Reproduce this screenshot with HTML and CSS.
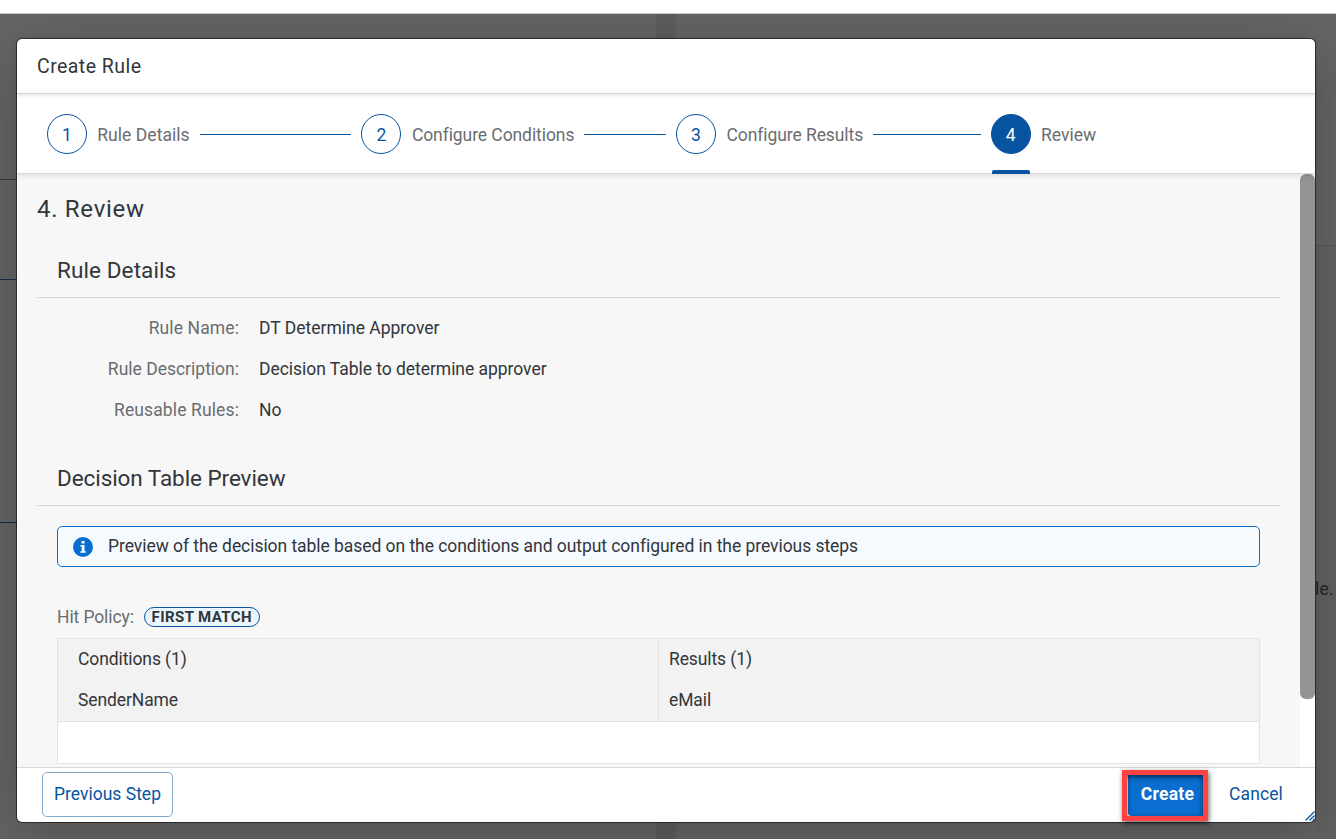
FILE: index.html
```html
<!DOCTYPE html>
<html lang="en">
<head>
<meta charset="utf-8">
<title>Create Rule</title>
<link rel="stylesheet" href="styles.css">
</head>
<body>
<div class="topbar"></div>
<div class="backdrop">
  <div class="page-left"><div class="tile tile-first"></div><div class="tile tile-second"></div><div class="tile tile-third"></div></div>
  <div class="page-gap"></div>
  <div class="page-right"><span class="page-text">le.</span></div>
  <section class="dialog">
    <header class="dialog-header"><h1 class="dialog-title">Create Rule</h1></header>
    <nav class="steps">
      <div class="step"><span class="step-number">1</span><span class="step-label label-details">Rule Details</span><span class="step-line"></span></div>
      <div class="step"><span class="step-number">2</span><span class="step-label label-conditions">Configure Conditions</span><span class="step-line"></span></div>
      <div class="step"><span class="step-number">3</span><span class="step-label label-results">Configure Results</span><span class="step-line"></span></div>
      <div class="step current"><span class="step-number">4</span><span class="step-label">Review</span></div>
    </nav>
    <div class="dialog-body">
      <main class="content">
        <h2 class="step-title">4. Review</h2>
        <h3 class="section-title title-details">Rule Details</h3>
        <dl class="details">
          <dt class="wide">Rule Name:</dt><dd>DT Determine Approver</dd>
          <dt>Rule Description:</dt><dd class="description">Decision Table to determine approver</dd>
          <dt class="wide">Reusable Rules:</dt><dd>No</dd>
        </dl>
        <h3 class="section-title title-preview">Decision Table Preview</h3>
        <div class="message">
          <svg class="info" width="20" height="20" viewBox="0 0 20 20"><circle cx="10" cy="10" r="10" fill="#0a6ed1"/><path d="M8.6 4h2.9v2.5H8.6zM7.5 8h4v6.2h1.3v1.5H7.4v-1.5h1.3V9.4H7.5z" fill="#fff"/></svg>
          <span class="message-text">Preview of the decision table based on the conditions and output configured in the previous steps</span>
        </div>
        <div class="policy"><span class="policy-label">Hit Policy:</span><span class="badge">FIRST MATCH</span></div>
        <div class="table">
          <div class="table-head">
            <div class="cell"><span>Conditions (1)</span><span>SenderName</span></div>
            <div class="cell cell-results"><span>Results (1)</span><span>eMail</span></div>
          </div>
          <div class="table-row"></div>
        </div>
      </main>
      <div class="scrollbar"><div class="thumb"></div></div>
    </div>
    <footer class="dialog-footer">
      <button class="button previous">Previous Step</button>
      <div class="highlight"><button class="button create">Create</button></div>
      <button class="button cancel">Cancel</button>
      <svg class="resize" width="11" height="11" viewBox="0 0 11 11"><path d="M1.5 9.5 10.5.5M5.5 9.5 10.5 4.5M8.8 9.8 10.5 8.1" stroke="#0854a0" stroke-width="1.4" fill="none"/></svg>
    </footer>
  </section>
</div>
</body>
</html>
```
FILE: styles.css
```css
* { box-sizing: border-box; }
body {
  margin: 0;
  height: 839px;
  overflow: hidden;
  display: flex;
  flex-direction: column;
  font-family: Roboto, "Noto Sans", sans-serif;
  font-size: 17.5px;
  color: #32363a;
}
h1, h2, h3, dl, dd { margin: 0; font-weight: 400; }
.topbar { height: 14px; flex: none; background: #fff; border-bottom: 1px solid #ccc; }
.backdrop {
  position: relative;
  flex: 1;
  padding: 25px 21px 17px 17px;
  background: #656565;
  overflow: hidden;
}
.page-left { position: absolute; left: 0; top: 0; width: 656px; height: 100%; }
.tile { border-bottom: 1px solid #3a3b3c; }
.tile-first { height: 166px; }
.tile-second { height: 100px; border-color: #1c2f45; }
.tile-third { height: 243px; border-color: #122b49; }
.page-gap { position: absolute; left: 656px; top: 0; width: 20px; height: 100%; background: #5c5f5e; }
.page-right { position: absolute; left: 1315px; top: 231px; width: 21px; height: 594px; border-top: 1px solid #565656; background: #626262; }
.page-text { position: absolute; left: 0; top: 333px; line-height: 20px; letter-spacing: .2px; color: #252729; }
.dialog {
  position: relative;
  width: 1298px;
  height: 783px;
  display: flex;
  flex-direction: column;
  border-radius: 5px;
  background: #fff;
  box-shadow: 0 0 0 1px rgba(0,0,0,.5), 0 12px 60px rgba(0,0,0,.24);
}
.dialog-header {
  height: 55px;
  flex: none;
  padding-left: 20px;
  border-bottom: 1px solid #d9d9d9;
  box-shadow: 0 1px 4px rgba(0,0,0,.12);
}
.dialog-title { font-size: 19.5px; line-height: 56px; letter-spacing: .45px; }
.steps {
  position: relative;
  z-index: 1;
  height: 80px;
  flex: none;
  display: flex;
  padding-left: 29.8px;
  border-bottom: 1px solid #d9d9d9;
  box-shadow: 0 2px 5px rgba(0,0,0,.1);
}
.step { position: relative; flex: none; width: 314.6px; height: 79px; display: flex; align-items: center; padding-right: 10px; }
.step-number {
  width: 40px;
  height: 40px;
  flex: none;
  border: 1px solid #0854a0;
  border-radius: 50%;
  line-height: 40px;
  text-align: center;
  color: #0854a0;
}
.step-label { margin: 2px 10px 0 10.5px; color: #6a6d70; white-space: nowrap; }
.label-details { letter-spacing: .04px; }
.label-conditions { letter-spacing: -.08px; }
.label-results { letter-spacing: -.08px; }
.step-line { flex: 1; height: 1px; margin-top: 2px; background: #0854a0; }
.current .step-number { background: #0854a0; color: #fff; }
.current::after {
  content: "";
  position: absolute;
  left: 1px;
  bottom: -1px;
  width: 38px;
  height: 4px;
  border-radius: 2px 2px 0 0;
  background: #0854a0;
}
.dialog-body { flex: 1; min-height: 0; display: flex; background: #f7f7f7; overflow: hidden; }
.content { width: 1283px; padding: 15px 20px 0; }
.scrollbar { width: 15px; background: #fff; }
.thumb { height: 525px; border-radius: 6px; background: #949494; }
.step-title { font-size: 24px; line-height: 40px; letter-spacing: .7px; }
.section-title { height: 69px; padding: 29px 0 0 20px; border-bottom: 1px solid #d9d9d9; font-size: 22.5px; line-height: 24px; }
.title-details { letter-spacing: .1px; }
.title-preview { letter-spacing: -.07px; }
.details { display: grid; grid-template-columns: 202px 1fr; column-gap: 20px; grid-auto-rows: 41px; line-height: 41px; padding-top: 10px; height: 139px; }
.details dt { text-align: right; color: #6a6d70; }
.details .wide { letter-spacing: .12px; }
.description { letter-spacing: -.04px; }
.message {
  display: flex;
  align-items: center;
  gap: 15px;
  height: 41px;
  margin: 20px 20px 0;
  padding-left: 15px;
  border: 1px solid #0a6ed1;
  border-radius: 5px;
  background: #f5faff;
  white-space: nowrap;
}
.message-text { letter-spacing: -.053px; padding-bottom: 2px; }
.policy { display: flex; align-items: center; gap: 10px; height: 20px; margin: 40px 0 11px 20px; color: #6a6d70; }
.policy-label { letter-spacing: -.1px; }
.badge {
  width: 116px;
  height: 20px;
  border: 1px solid #0854a0;
  border-radius: 10px;
  background: #ebf5fe;
  color: #32363a;
  font-size: 15px;
  font-weight: 700;
  line-height: 18px;
  letter-spacing: .4px;
  text-align: center;
  white-space: nowrap;
}
.table { width: 1203px; margin-left: 20px; border: 1px solid #e4e4e4; background: #fff; }
.table-head { display: flex; height: 83px; border-bottom: 1px solid #e4e4e4; background: #f2f2f2; }
.cell { width: 600px; padding-left: 20px; display: flex; flex-direction: column; align-items: flex-start; line-height: 41px; letter-spacing: -.1px; }
.cell-results { flex: 1; padding-left: 10px; border-left: 1px solid #e4e4e4; }
.table-row { height: 41px; }
.dialog-footer { position: relative; height: 55px; flex: none; display: flex; padding: 2px 20px 0 25px; border-top: 1px solid #d9d9d9; }
.button { font: inherit; padding: 0; border: 0; background: transparent; color: #0854a0; white-space: nowrap; }
.previous { width: 131px; height: 45px; margin-top: 2px; padding-bottom: 2px; border: 1px solid #84a9cf; border-radius: 5px; }
.highlight {
  width: 86px;
  height: 51px;
  margin-left: auto;
  border: 5px solid #ff4343;
  background: #fff;
  box-shadow: 1px 2px 5px rgba(0,0,0,.6);
  position: relative;
}
.highlight::after { content: ""; position: absolute; inset: 0; box-shadow: inset 0 2px 5px rgba(0,0,0,.65); }
.create { display: block; width: 75px; height: 41px; margin-left: 1px; padding: 0 0 4px 4px; border-radius: 0 0 0 4px; background: #0a6ed1; color: #fff; font-weight: 700; letter-spacing: .3px; }
.cancel { width: 54px; height: 45px; margin: 1px 12px 0 21px; letter-spacing: .1px; }
.resize { position: absolute; right: 0; bottom: 0; }
```
